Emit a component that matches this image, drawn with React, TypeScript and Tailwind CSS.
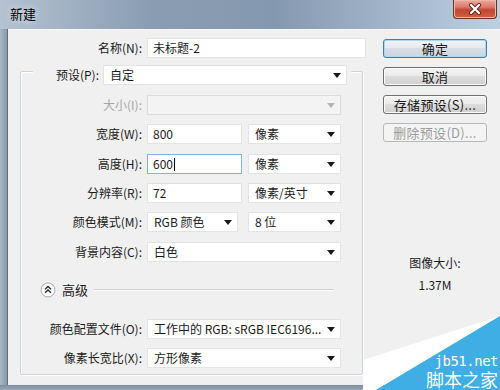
import type { ReactNode } from "react";

const Caret = ({ disabled = false }: { disabled?: boolean }) => (
  <svg width="8" height="5" viewBox="0 0 8 5" className="shrink-0">
    <path d="M0 0h8L4 5z" fill={disabled ? "#b4b4b4" : "#1a1a1a"} />
  </svg>
);

const Field = ({ w, value, focused = false }: { w: string; value: string; focused?: boolean }) => (
  <div
    className={`${w} h-[20px] flex items-center pl-[5px] bg-white border ${
      focused ? "border-[#7eb4ea]" : "border-[#e1e3e6]"
    }`}
  >
    <span className="leading-none">{value}</span>
    {focused && <span className="ml-[1px] w-[1px] h-[13px] bg-black" />}
  </div>
);

const Combo = ({ w, value = "", disabled = false }: { w: string; value?: string; disabled?: boolean }) => (
  <div
    className={`${w} h-[20px] flex items-center justify-between pl-[6px] pr-[5px] border ${
      disabled ? "bg-[#f3f3f3] border-[#dcdcdc]" : "bg-white border-[#e1e3e6]"
    }`}
  >
    <span className="leading-none whitespace-nowrap">{value}</span>
    <Caret disabled={disabled} />
  </div>
);

const Row = ({
  label,
  labelW = "w-[121px]",
  disabled = false,
  className = "",
  children,
}: {
  label: string;
  labelW?: string;
  disabled?: boolean;
  className?: string;
  children: ReactNode;
}) => (
  <div className={`flex items-center h-[20px] ${className}`}>
    <span className={`${labelW} text-right whitespace-nowrap ${disabled ? "text-[#a6a6a6]" : ""}`}>{label}</span>
    <div className="ml-[5px] flex gap-[6px]">{children}</div>
  </div>
);

const Button = ({
  text,
  kind = "normal",
  className = "",
}: {
  text: string;
  kind?: "normal" | "default" | "disabled";
  className?: string;
}) => {
  const look =
    kind === "default"
      ? "border-[#3c7fb1] bg-[linear-gradient(#f0f4f7,#e6ebef_45%,#d7dee5_50%,#cdd5dd)] shadow-[inset_0_0_0_1px_#a9d8f6]"
      : kind === "disabled"
      ? "border-[#b5b9bc] bg-[#f4f4f4] text-[#9c9c9c]"
      : "border-[#707070] bg-[linear-gradient(#f4f4f4,#ebebeb_45%,#dddddd_50%,#d0d0d0)] shadow-[inset_0_0_0_1px_#fbfbfb]";
  return (
    <div
      className={`w-[104px] h-[19px] flex items-center justify-center rounded-[3px] border text-[13px] tracking-[0.3px] ${look} ${className}`}
    >
      {text}
    </div>
  );
};

const CloseButton = () => (
  <div className="ml-auto mr-[3px] w-[44px] h-[19px] flex items-center justify-center rounded-b-[4px] border border-t-0 border-[#6b2f26] bg-[linear-gradient(#e9ab9f,#d9786a_40%,#c24532_55%,#d0613f)] shadow-[inset_0_0_0_1px_#f0b7a8]">
    <svg width="14" height="12" viewBox="0 0 14 12">
      <path d="M3 2l8 8M11 2l-8 8" stroke="#5a2a22" strokeWidth="4" strokeLinecap="round" />
      <path d="M3 2l8 8M11 2l-8 8" stroke="#ffffff" strokeWidth="2.2" strokeLinecap="round" />
    </svg>
  </div>
);

const AdvancedIcon = () => (
  <svg width="16" height="16" viewBox="0 0 16 16" className="shrink-0">
    <circle cx="8" cy="8" r="7" fill="#fdfdfd" stroke="#a8a8a8" />
    <path d="M5 7.2l3-2.7 3 2.7M5 10.7l3-2.7 3 2.7" fill="none" stroke="#2b2b2b" strokeWidth="1.4" />
  </svg>
);

export default function App() {
  return (
    <div className="relative w-[500px] h-[390px] overflow-hidden bg-[#8d9db0] font-['Noto_Sans_CJK_SC',sans-serif] text-[12px] text-[#1b1b1b]">
      {/* 标题栏 */}
      <div className="flex h-[29px] items-start bg-[linear-gradient(to_right,#b4c2d1,#8a9db2_30%,#8498af_55%,#a4b7cc_80%,#bdd0e3)]">
        <span className="ml-[10px] mt-[6px] text-[13px] leading-[16px] text-black [text-shadow:0_0_6px_#eef3f8]">新建</span>
        <CloseButton />
      </div>

      <div className="flex h-[356px]">
        <div className="w-[8px] bg-[linear-gradient(to_right,#aab7c4,#8a99a9)] border-r border-[#5f6f80]" />
        <div className="flex-1 flex bg-[#f0f0f0] border-t border-[#f8f8f8]">
          {/* 左侧 */}
          <div className="w-[363px] flex flex-col">
            <Row label="名称(N):" labelW="w-[134px]" className="mt-[8px]">
              <Field w="w-[219px]" value="未标题-2" />
            </Row>

            <div className="mt-[13px] ml-[12px] w-[343px] pb-[6px] border border-[#cdd5dc] rounded-[2px] shadow-[inset_1px_1px_0_#fff,1px_1px_0_#fff]">
              <div className="-mt-[7px] ml-[12px] w-[318px] h-[20px] flex items-center bg-[#f0f0f0]">
                <span className="w-[66px] text-right">预设(P):</span>
                <div className="ml-[4px]">
                  <Combo w="w-[244px]" value="自定" />
                </div>
              </div>

              <Row label="大小(I):" disabled className="mt-[10px]">
                <Combo w="w-[194px]" disabled />
              </Row>
              <Row label="宽度(W):" className="mt-[9px]">
                <Field w="w-[95px]" value="800" />
                <Combo w="w-[93px]" value="像素" />
              </Row>
              <Row label="高度(H):" className="mt-[10px]">
                <Field w="w-[95px]" value="600" focused />
                <Combo w="w-[93px]" value="像素" />
              </Row>
              <Row label="分辨率(R):" className="mt-[9px]">
                <Field w="w-[95px]" value="72" />
                <Combo w="w-[93px]" value="像素/英寸" />
              </Row>
              <Row label="颜色模式(M):" className="mt-[9px]">
                <div className="flex gap-[10px]">
                  <Combo w="w-[91px]" value="RGB 颜色" />
                  <Combo w="w-[93px]" value="8 位" />
                </div>
              </Row>
              <Row label="背景内容(C):" className="mt-[10px]">
                <Combo w="w-[194px]" value="白色" />
              </Row>

              {/* 高级 */}
              <div className="mt-[20px] h-[16px] flex items-center pl-[19px]">
                <AdvancedIcon />
                <span className="ml-[6px] text-[13px]">高级</span>
                <div className="ml-[6px] w-[240px] h-[2px] border-t border-[#cfcfcf] border-b border-b-white" />
              </div>

              <Row label="颜色配置文件(O):" className="mt-[21px]">
                <Combo w="w-[194px]" value="工作中的 RGB: sRGB IEC6196..." />
              </Row>
              <Row label="像素长宽比(X):" className="mt-[9px]">
                <Combo w="w-[194px]" value="方形像素" />
              </Row>
            </div>
          </div>

          {/* 右侧按钮 */}
          <div className="pl-[12px] flex flex-col">
            <Button text="确定" kind="default" className="mt-[9px]" />
            <Button text="取消" className="mt-[9px]" />
            <Button text="存储预设(S)..." className="mt-[9px]" />
            <Button text="删除预设(D)..." kind="disabled" className="mt-[9px]" />
            <div className="mt-[113px] w-[104px] text-center leading-[16px]">图像大小:</div>
            <div className="mt-[6px] w-[104px] text-center leading-[16px]">1.37M</div>
          </div>
        </div>
      </div>
      <div className="h-[5px] bg-[linear-gradient(#7e8e9f,#98a7b7)]" />

      {/* 水印 */}
      <svg width="140" height="80" viewBox="0 0 140 80" className="absolute left-[360px] top-[310px]">
        <path d="M3 50L140 6L16 80H3Z" fill="#ffffff" />
        <path d="M16 80L140 6V80Z" fill="#3eaee4" />
      </svg>
      <div className="absolute right-[2px] bottom-0 flex flex-col items-end text-white">
        <span className="text-[14px] leading-[16px] font-light font-['DejaVu_Sans_Mono',monospace] tracking-[-0.5px]">
          jb51.net
        </span>
        <span className="text-[18px] leading-[21px]">脚本之家</span>
      </div>
    </div>
  );
}
